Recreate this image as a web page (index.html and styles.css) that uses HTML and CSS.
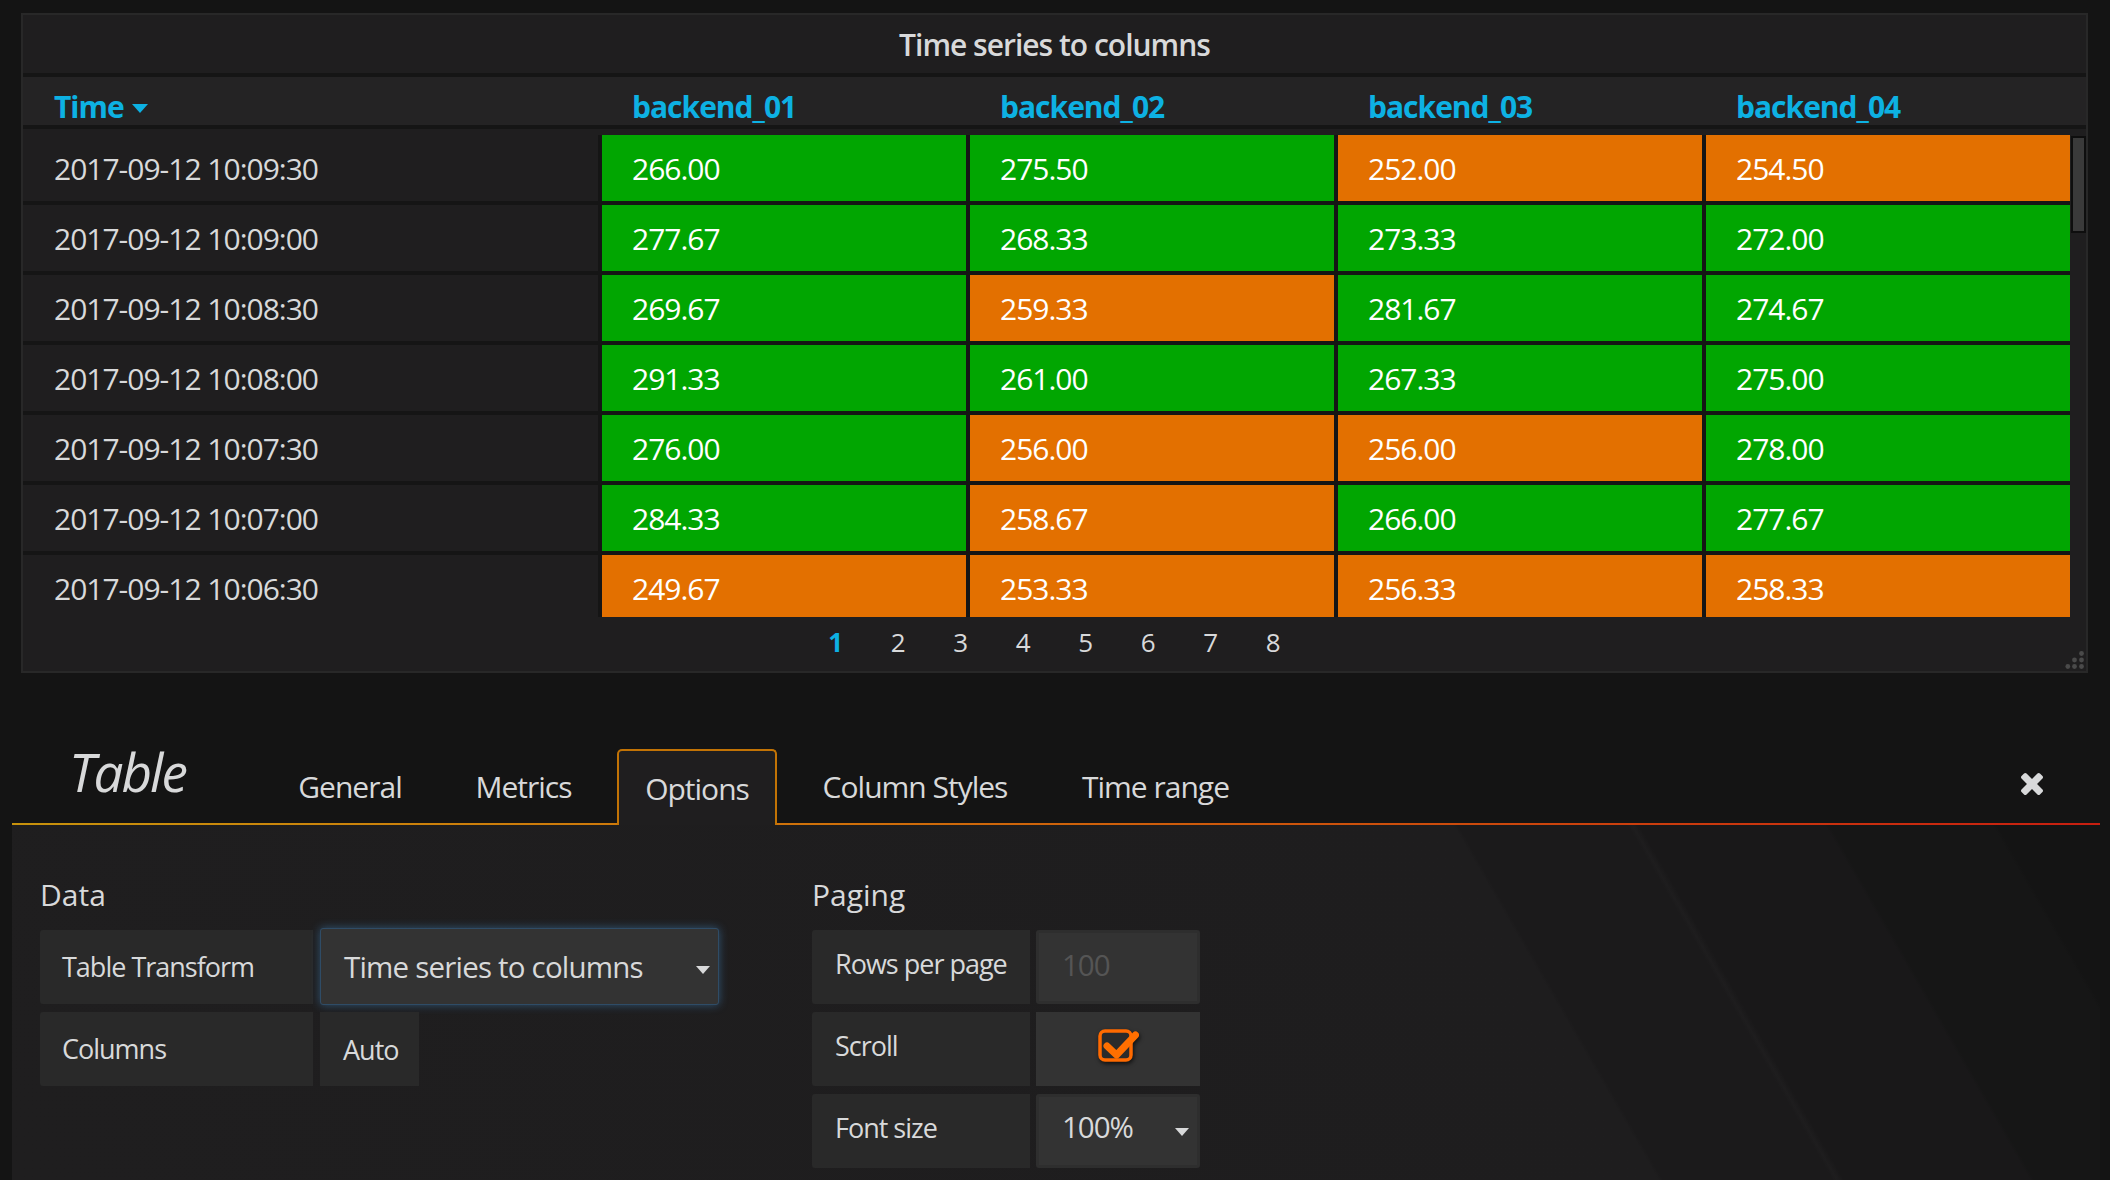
FILE: index.html
```html
<!DOCTYPE html>
<html>
<head>
<meta charset="utf-8">
<title>Table panel</title>
<link rel="stylesheet" href="styles.css">
</head>
<body>
<div class="panel">
  <div class="panel-title">Time series to columns</div>
  <div class="thead">
    <div class="th th-time">Time<span class="sort-caret"></span></div>
    <div class="th">backend_01</div>
    <div class="th">backend_02</div>
    <div class="th">backend_03</div>
    <div class="th">backend_04</div>
  </div>
  <div class="tbody-wrap">
    <div class="tbody">
      <div class="tr"><div class="td time">2017-09-12 10:09:30</div><div class="td v ok">266.00</div><div class="td v ok">275.50</div><div class="td v warn">252.00</div><div class="td v warn">254.50</div></div>
      <div class="tr"><div class="td time">2017-09-12 10:09:00</div><div class="td v ok">277.67</div><div class="td v ok">268.33</div><div class="td v ok">273.33</div><div class="td v ok">272.00</div></div>
      <div class="tr"><div class="td time">2017-09-12 10:08:30</div><div class="td v ok">269.67</div><div class="td v warn">259.33</div><div class="td v ok">281.67</div><div class="td v ok">274.67</div></div>
      <div class="tr"><div class="td time">2017-09-12 10:08:00</div><div class="td v ok">291.33</div><div class="td v ok">261.00</div><div class="td v ok">267.33</div><div class="td v ok">275.00</div></div>
      <div class="tr"><div class="td time">2017-09-12 10:07:30</div><div class="td v ok">276.00</div><div class="td v warn">256.00</div><div class="td v warn">256.00</div><div class="td v ok">278.00</div></div>
      <div class="tr"><div class="td time">2017-09-12 10:07:00</div><div class="td v ok">284.33</div><div class="td v warn">258.67</div><div class="td v ok">266.00</div><div class="td v ok">277.67</div></div>
      <div class="tr"><div class="td time">2017-09-12 10:06:30</div><div class="td v warn">249.67</div><div class="td v warn">253.33</div><div class="td v warn">256.33</div><div class="td v warn">258.33</div></div>
    </div>
    <div class="scrollbar"><div class="thumb"></div></div>
  </div>
  <div class="pager">
    <span class="page active">1</span><span class="page">2</span><span class="page">3</span><span class="page">4</span><span class="page">5</span><span class="page">6</span><span class="page">7</span><span class="page">8</span>
  </div>
  <svg class="resize-handle" width="20" height="20" viewBox="0 0 20 20">
    <circle cx="16.5" cy="3.5" r="2.4" fill="#4a4a4a"/>
    <circle cx="9.5" cy="10" r="2.4" fill="#4a4a4a"/>
    <circle cx="16.5" cy="10" r="2.4" fill="#4a4a4a"/>
    <circle cx="2.8" cy="16.5" r="2.4" fill="#4a4a4a"/>
    <circle cx="9.5" cy="16.5" r="2.4" fill="#4a4a4a"/>
    <circle cx="16.5" cy="16.5" r="2.4" fill="#4a4a4a"/>
  </svg>
</div>

<div class="editor">
  <div class="editor-header">
    <div class="editor-title">Table</div>
    <ul class="tabs">
      <li class="tab tab-general">General</li>
      <li class="tab tab-metrics">Metrics</li>
      <li class="tab tab-options active">Options</li>
      <li class="tab tab-styles">Column Styles</li>
      <li class="tab tab-time">Time range</li>
    </ul>
    <svg class="close" width="22" height="22" viewBox="0 232 1188 1188">
      <path fill="#d8d9da" d="M1188 1188q0 40-28 68l-136 136q-28 28-68 28t-68-28l-294-294-294 294q-28 28-68 28t-68-28l-136-136q-28-28-28-68t28-68l294-294-294-294q-28-28-28-68t28-68l136-136q28-28 68-28t68 28l294 294 294-294q28-28 68-28t68 28l136 136q28 28 28 68t-28 68l-294 294 294 294q28 28 28 68z"/>
    </svg>
  </div>
  <div class="editor-body">
    <section class="section section-data">
      <h5 class="section-title">Data</h5>
      <div class="form-row">
        <div class="label label-wide">Table Transform</div>
        <div class="select select-focus"><span>Time series to columns</span><span class="caret"></span></div>
      </div>
      <div class="form-row">
        <div class="label label-wide">Columns</div>
        <div class="value value-auto">Auto</div>
      </div>
    </section>
    <section class="section section-paging">
      <h5 class="section-title">Paging</h5>
      <div class="form-row">
        <div class="label label-narrow">Rows per page</div>
        <div class="input"><span class="placeholder">100</span></div>
      </div>
      <div class="form-row">
        <div class="label label-narrow">Scroll</div>
        <div class="checkbox-box">
          <svg class="checkbox" width="44" height="38" viewBox="0 0 44 38">
            <rect x="2" y="4" width="31" height="29" rx="5" fill="#2b2b2b" stroke="#ff6a00" stroke-width="3.5"/>
            <polyline points="9,19 18.5,28 37.5,8" fill="none" stroke="#ff6f00" stroke-width="7" stroke-linecap="round" stroke-linejoin="round"/>
          </svg>
        </div>
      </div>
      <div class="form-row">
        <div class="label label-narrow">Font size</div>
        <div class="input input-select"><span>100%</span><span class="caret"></span></div>
      </div>
    </section>
  </div>
</div>
</body>
</html>
```

FILE: styles.css
```css
* { box-sizing: border-box; }
html, body { margin: 0; padding: 0; }
body {
  background: #141414;
  color: #d8d9da;
  font-family: "Open Sans", "Noto Sans", "DejaVu Sans", sans-serif;
  font-stretch: 92%;
  letter-spacing: -1px;
  width: 2110px;
  height: 1180px;
  overflow: hidden;
}

/* ---------- Panel ---------- */
.panel {
  position: relative;
  margin: 13px 0 0 21px;
  width: 2067px;
  height: 660px;
  background: #1f1e1f;
  border: 2px solid #282828;
}
.panel-title {
  height: 62px;
  display: flex;
  align-items: center;
  justify-content: center;
  font-size: 30px;
  font-weight: 600;
  border-bottom: 4px solid #151515;
}
.thead {
  display: grid;
  grid-template-columns: 575px repeat(4, 368px) 16px;
  height: 52px;
  padding-top: 9px;
  align-items: center;
  background: #242324;
  border-bottom: 4px solid #151515;
  color: #0db1e3;
  font-size: 30px;
  font-weight: 700;
}
.th { padding-left: 34px; white-space: nowrap; }
.th-time { padding-left: 31px; display: flex; align-items: center; }
.sort-caret {
  display: inline-block;
  margin-left: 8px;
  margin-top: 4px;
  width: 0;
  height: 0;
  border-left: 8px solid transparent;
  border-right: 8px solid transparent;
  border-top: 9px solid #0db1e3;
}
.tbody-wrap {
  display: flex;
  height: 488px;
  overflow: hidden;
}
.tbody {
  width: 2047px;
  padding-top: 6px;
}
.tr {
  display: grid;
  grid-template-columns: 575px repeat(4, 368px);
  height: 70px;
  border-bottom: 4px solid #151515;
}
.td {
  display: flex;
  align-items: center;
  font-size: 30px;
  white-space: nowrap;
}
.td.time { padding-left: 31px; color: #d8d9da; }
.td.v { border-left: 4px solid #151515; padding-left: 30px; color: #ffffff; }
.td.ok { background: #01a601; }
.td.warn { background: #e37000; }
.scrollbar { width: 16px; }
.thumb {
  margin: 7px 0 0 1px;
  width: 15px;
  height: 97px;
  background: #3a3a3a;
  border: 2px solid #0e0e0e;
}
.pager {
  height: 54px;
  padding-bottom: 4px;
  display: flex;
  justify-content: center;
  align-items: center;
  font-size: 26px;
  letter-spacing: 0;
}
.page { width: 62.5px; text-align: center; color: #d8d9da; }
.page.active { color: #0db1e3; font-weight: 700; }
.resize-handle { position: absolute; right: 1px; bottom: 1px; }

/* ---------- Editor ---------- */
.editor { margin-left: 12px; width: 2088px; }
.editor-header {
  display: flex;
  align-items: flex-end;
  height: 152px;
  padding-left: 57px;
  border-bottom: 2px solid #c8600a;
  border-image: linear-gradient(to right, #c8920c 0%, #d0700a 40%, #cc4a0c 70%, #c81e10 100%) 1;
}
.editor-title {
  width: 201px;
  font-size: 53px;
  font-style: italic;
  letter-spacing: -2px;
  line-height: 1;
  margin-bottom: 25px;
}
.tabs {
  display: flex;
  list-style: none;
  margin: 0;
  padding: 0;
}
.tab {
  height: 76px;
  margin-bottom: -2px;
  margin-right: 16px;
  padding-bottom: 4px;
  display: flex;
  align-items: center;
  justify-content: center;
  font-size: 30px;
  white-space: nowrap;
  border: 2px solid transparent;
  border-bottom: 0;
  border-radius: 5px 5px 0 0;
}
.tab-general { width: 160px; }
.tab-metrics { width: 155px; }
.tab-options { width: 160px; }
.tab-styles { width: 244px; }
.tab-time { width: 205px; }
.tab.active {
  background: #1f1e1f;
  border-color: #c27305;
  padding-top: 2px;
  padding-bottom: 2px;
}
.close { margin-left: auto; margin-right: 57px; margin-bottom: 28px; }

.editor-body {
  height: 355px;
  display: flex;
  padding: 52px 0 0 28px;
  background: linear-gradient(60deg,
    #1f1e1f 0%, #1e1d1e 71.8%,
    #1b1a1b 72%, #1b1a1b 79.4%,
    #1e1d1e 79.6%, #191819 79.9%, #191819 88%,
    #161616 88.2%, #161616 95.3%,
    #141414 95.5%, #141414 100%);
}
.section-data { width: 772px; }
.section-title {
  margin: 0 0 17px;
  font-size: 30px;
  line-height: 36px;
  font-weight: 400;
  letter-spacing: 0;
}
.form-row {
  display: flex;
  gap: 7px;
  height: 74px;
  margin-bottom: 8px;
}
.section-paging .form-row { gap: 6px; }
.label {
  display: flex;
  align-items: center;
  background: #292929;
  border-radius: 3px 0 0 3px;
  padding-left: 22px;
  padding-bottom: 2px;
  font-size: 27px;
  white-space: nowrap;
}
.label-wide { width: 273px; }
.label-narrow { width: 218px; padding-left: 23px; padding-bottom: 7px; }
.select {
  width: 399px;
  display: flex;
  align-items: center;
  justify-content: space-between;
  background: #333333;
  border: 1px solid #2f4c66;
  border-radius: 3px;
  box-shadow: 0 0 10px rgba(70, 150, 220, 0.45);
  padding: 0 8px 0 23px;
  font-size: 29.5px;
  letter-spacing: -0.8px;
  margin-top: -2px;
  height: 77px;
  white-space: nowrap;
}
.caret {
  width: 0;
  height: 0;
  border-left: 7.5px solid transparent;
  border-right: 7.5px solid transparent;
  border-top: 8px solid #d8d9da;
  margin-top: 6px;
}
.value {
  display: flex;
  align-items: center;
  background: #292929;
  font-size: 27px;
  padding-left: 23px;
}
.value-auto { width: 99px; }
.input {
  width: 164px;
  display: flex;
  align-items: center;
  background: #333333;
  border: 3px solid #2e2e2e;
  border-radius: 3px;
  padding-left: 23px;
  padding-bottom: 5px;
  font-size: 29.5px;
}
.placeholder { color: #555555; }
.input-select { justify-content: space-between; padding-right: 8px; padding-bottom: 9px; }
.input-select .caret { margin-top: 10px; }
.checkbox-box {
  width: 164px;
  display: flex;
  align-items: center;
  justify-content: center;
  background: #333333;
  padding-left: 4px;
}
.checkbox { filter: drop-shadow(1px 2px 2px rgba(0, 0, 0, 0.7)); margin-top: -7px; }
```
